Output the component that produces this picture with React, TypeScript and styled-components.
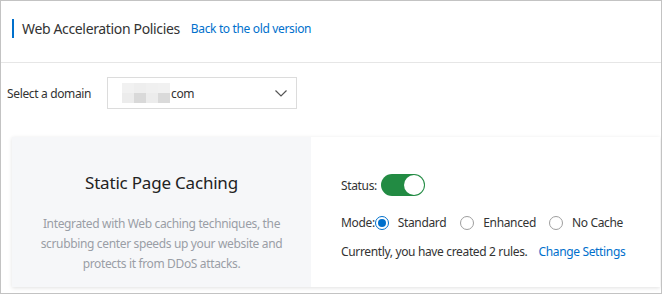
import React from "react";
import styled, { createGlobalStyle } from "styled-components";

const Global = createGlobalStyle`
  html, body { margin: 0; padding: 0; background: #fff; }
  body { font-family: "Segoe UI", "Noto Sans", Arial, sans-serif; letter-spacing: -0.35px; }
  * { box-sizing: border-box; }
`;

const Frame = styled.div`
  width: 662px;
  height: 294px;
  border: 1px solid #c3c3c3;
  overflow: hidden;
  color: #333;
`;

const Header = styled.div`
  height: 62px;
  border-bottom: 1px solid #e6e6e6;
  display: flex;
  align-items: center;
  padding-left: 11px;
  padding-bottom: 6px;
`;

const TitleBar = styled.div`
  width: 2px;
  height: 19px;
  background: #0070cc;
  margin-right: 8px;
`;

const Title = styled.h1`
  margin: 0;
  font-size: 14px;
  font-weight: 400;
  color: #333;
  margin-right: 11px;
`;

const Link = styled.a`
  font-size: 12px;
  color: #0070cc;
  text-decoration: none;
  cursor: pointer;
`;

const DomainRow = styled.div`
  display: flex;
  align-items: center;
  padding-left: 6px;
  margin-top: 14px;
`;

const Label = styled.span`
  font-size: 12px;
  color: #333;
  width: 100px;
`;

const SelectBox = styled.div`
  width: 190px;
  height: 32px;
  border: 1px solid #dcdcdc;
  display: flex;
  align-items: center;
  padding: 0 9px 0 14px;
  font-size: 12px;
  color: #333;
`;

const Masked = styled.span`
  display: inline-grid;
  grid-template-columns: repeat(4, 12px);
  grid-template-rows: 10px 10px;
  margin-right: 1px;
`;

const Cell = styled.span<{ $c: string }>`
  background: ${(p) => p.$c};
`;

const Chevron = styled.span`
  margin-left: auto;
  display: flex;
`;

const Card = styled.div`
  margin: 28px 1px 0 11px;
  height: 150px;
  display: flex;
  box-shadow: 0 1px 4px rgba(0, 0, 0, 0.12);
`;

const Intro = styled.div`
  width: 299px;
  background: #f6f7f9;
  display: flex;
  flex-direction: column;
  align-items: center;
  padding-top: 34px;
`;

const IntroTitle = styled.div`
  font-size: 17px;
  letter-spacing: -0.2px;
  color: #222;
  margin-bottom: 20px;
`;

const IntroText = styled.div`
  font-size: 12px;
  line-height: 20px;
  color: #9a9ea6;
  text-align: center;
  width: 260px;
`;

const Settings = styled.div`
  flex: 1;
  background: #fff;
  padding: 37px 0 0 30px;
  font-size: 12px;
  color: #333;
`;

const Row = styled.div<{ $mt?: number }>`
  display: flex;
  align-items: center;
  margin-top: ${(p) => p.$mt ?? 0}px;
`;

const Switch = styled.span`
  width: 44px;
  height: 22px;
  border-radius: 11px;
  background: #228b43;
  display: flex;
  align-items: center;
  justify-content: flex-end;
  padding-right: 1px;
  margin-left: 4px;
`;

const Knob = styled.span`
  width: 20px;
  height: 20px;
  border-radius: 50%;
  background: #fff;
`;

const Radio = styled.span<{ $checked?: boolean }>`
  width: 14px;
  height: 14px;
  border-radius: 50%;
  border: 1px solid ${(p) => (p.$checked ? "#0070cc" : "#9e9e9e")};
  display: inline-flex;
  align-items: center;
  justify-content: center;
  margin-right: 9px;
  &::after {
    content: "";
    width: 8px;
    height: 8px;
    border-radius: 50%;
    background: ${(p) => (p.$checked ? "#0070cc" : "transparent")};
  }
`;

const Option = styled.label<{ $gap: number }>`
  display: inline-flex;
  align-items: center;
  margin-right: ${(p) => p.$gap}px;
`;

const Note = styled.span`
  margin-right: 11px;
`;

export default function App() {
  return (
    <>
      <Global />
      <Frame>
        <Header>
          <TitleBar />
          <Title>Web Acceleration Policies</Title>
          <Link>Back to the old version</Link>
        </Header>
        <DomainRow>
          <Label>Select a domain</Label>
          <SelectBox>
            <Masked>
              <Cell $c="#f1f1f1" />
              <Cell $c="#eeeeee" />
              <Cell $c="#f0f0f0" />
              <Cell $c="#f1f1f1" />
              <Cell $c="#ececec" />
              <Cell $c="#d9d9d9" />
              <Cell $c="#ececec" />
              <Cell $c="#dadada" />
            </Masked>
            com
            <Chevron>
              <svg width="12" height="7" viewBox="0 0 12 7">
                <path d="M0.5 0.5l5.5 5.5 5.5-5.5" fill="none" stroke="#555" strokeWidth="1.2" />
              </svg>
            </Chevron>
          </SelectBox>
        </DomainRow>
        <Card>
          <Intro>
            <IntroTitle>Static Page Caching</IntroTitle>
            <IntroText>
              Integrated with Web caching techniques, the scrubbing center speeds up your website and protects it from DDoS attacks.
            </IntroText>
          </Intro>
          <Settings>
            <Row>
              Status:
              <Switch>
                <Knob />
              </Switch>
            </Row>
            <Row $mt={18}>
              Mode:
              <Option $gap={14}>
                <Radio $checked />
                Standard
              </Option>
              <Option $gap={13}>
                <Radio />
                Enhanced
              </Option>
              <Option $gap={0}>
                <Radio />
                No Cache
              </Option>
            </Row>
            <Row $mt={12}>
              <Note>Currently, you have created 2 rules.</Note>
              <Link>Change Settings</Link>
            </Row>
          </Settings>
        </Card>
      </Frame>
    </>
  );
}
